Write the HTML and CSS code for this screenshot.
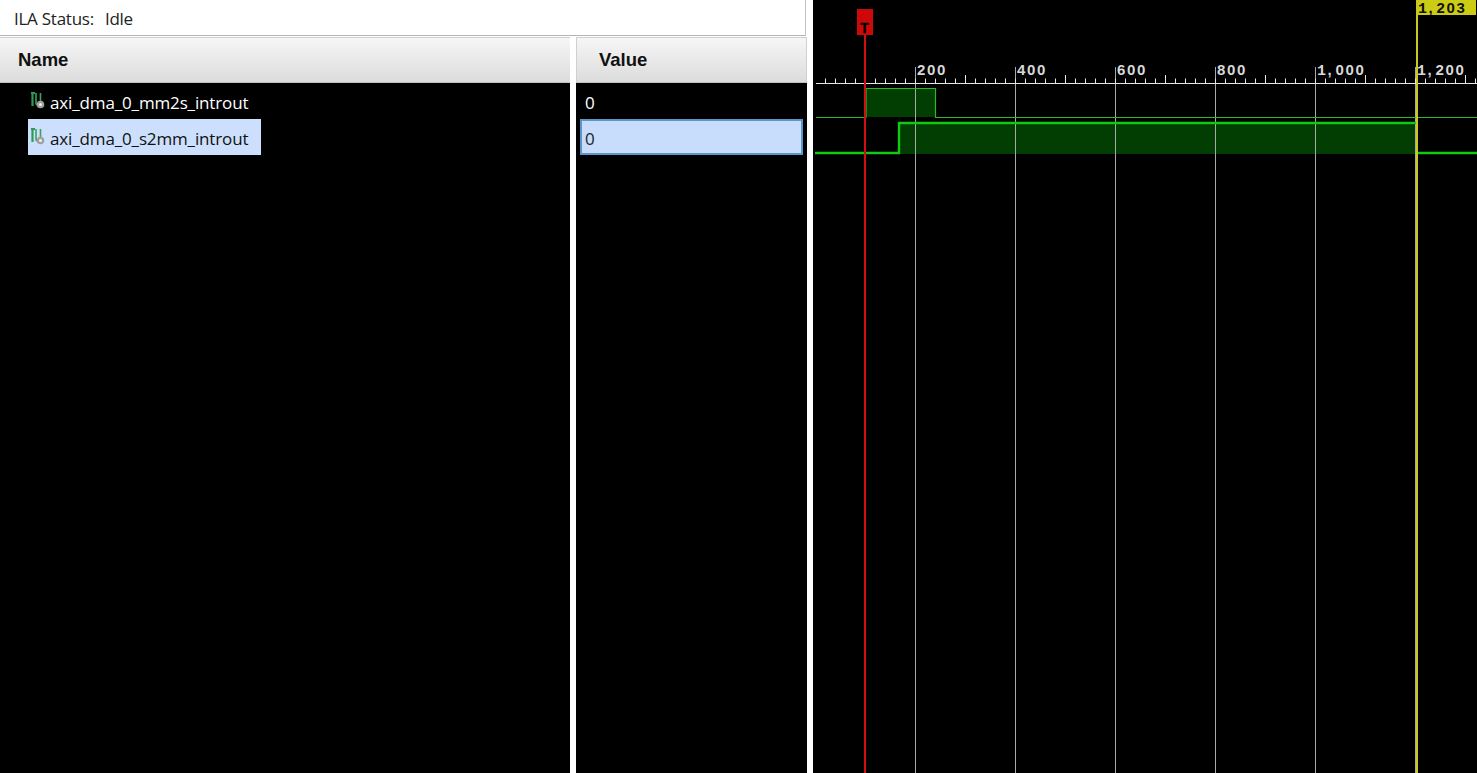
FILE: index.html
```html
<!DOCTYPE html>
<html lang="en">
<head>
<meta charset="utf-8">
<title>ILA Waveform</title>
<link rel="stylesheet" href="styles.css">
</head>
<body>
<div class="app">
  <section class="left">
    <div class="status"><span>ILA Status:</span><span>Idle</span></div>
    <div class="tables">
      <div class="col col-name">
        <div class="head">Name</div>
        <div class="body">
          <div class="row">
            <svg class="sig-icon" viewBox="0 0 16 17"><path class="ic-a" d="M1.5 0V14"/><path class="ic-a" d="M0 1H4"/><path class="ic-b" d="M5 1V11Q5 13 7 13M9.5 1V9"/><circle class="ic-c" cx="9.5" cy="12.5" r="3.8"/><circle class="ic-d" cx="9.5" cy="12.5" r="1.5"/></svg>
            <span class="label">axi_dma_0_mm2s_introut</span>
          </div>
          <div class="row selected">
            <svg class="sig-icon" viewBox="0 0 16 17"><path class="ic-a" d="M1.5 0V14"/><path class="ic-a" d="M0 1H4"/><path class="ic-b" d="M5 1V11Q5 13 7 13M9.5 1V9"/><circle class="ic-c" cx="9.5" cy="12.5" r="3.8"/><circle class="ic-d" cx="9.5" cy="12.5" r="1.5"/></svg>
            <span class="label">axi_dma_0_s2mm_introut</span>
          </div>
        </div>
      </div>
      <div class="col col-value">
        <div class="head">Value</div>
        <div class="body">
          <div class="val">0</div>
          <div class="val val-selected">0</div>
        </div>
      </div>
    </div>
  </section>
  <section class="wave">
    <svg class="wave-svg" width="664" height="773" viewBox="813 0 664 773">
      <path class="fill" d="M866 88H935V117H866Z"/>
      <path class="fill" d="M899 123H1416V154H899Z"/>
      <path class="grid" d="M915.5 67V773M1015.5 67V773M1115.5 67V773M1215.5 67V773M1315.5 67V773M1415.5 67V773"/>
      <line class="axis" x1="816" y1="83.5" x2="1477" y2="83.5"/>
      <line class="ticks" x1="825" y1="81" x2="1477" y2="81"/>
      <path class="axis" d="M965.5 75V83M1065.5 75V83M1165.5 75V83M1265.5 75V83M1365.5 75V83M1465.5 75V83"/>
      <text class="tick-label" x="917" y="75">200</text>
      <text class="tick-label" x="1017" y="75">400</text>
      <text class="tick-label" x="1117" y="75">600</text>
      <text class="tick-label" x="1217" y="75">800</text>
      <text class="tick-label" x="1317" y="75"><tspan class="mono">1</tspan><tspan class="comma" dx="1.5">,</tspan>000</text>
      <text class="tick-label" x="1417" y="75"><tspan class="mono">1</tspan><tspan class="comma" dx="1.5">,</tspan>200</text>
      <path class="sig-thin" d="M816 117.5H866V88.5H935.5V117.5H1477"/>
      <path class="sig-bold" d="M815 153H899V123H1416"/>
      <path class="sig-bold" d="M1418 153H1477"/>
      <rect class="t-line" x="864" y="30" width="2" height="743"/>
      <rect class="t-flag" x="857" y="9" width="16" height="26"/>
      <text class="t-text" x="864.5" y="33">T</text>
      <rect class="c-line" x="1416" y="0" width="2" height="773"/>
      <rect class="c-flag" x="1418" y="0" width="58" height="15"/>
      <text class="c-text" x="1418" y="13"><tspan class="mono">1</tspan><tspan class="comma" dx="1.5">,</tspan>203</text>
    </svg>
  </section>
</div>
</body>
</html>
```
FILE: styles.css
```css
html, body {
  margin: 0;
  padding: 0;
  height: 100%;
  background: #fff;
  overflow: hidden;
}
.app {
  display: flex;
  height: 773px;
  width: 1477px;
}
.left {
  width: 807px;
  display: flex;
  flex-direction: column;
  background: #fff;
  margin-right: 6px;
}
.status {
  height: 33px;
  width: 791px;
  padding: 2px 0 0 14px;
  border-bottom: 1px solid #b4b4b4;
  border-right: 1px solid #c4c4c4;
  display: flex;
  align-items: center;
  gap: 11px;
  font: 17px "Open Sans", "Noto Sans", sans-serif;
  letter-spacing: -0.25px;
  color: #222;
}
.tables {
  flex: 1;
  display: flex;
  gap: 6px;
  padding-top: 1px;
  min-height: 0;
}
.col {
  display: flex;
  flex-direction: column;
}
.col-name { width: 570px; }
.col-value { width: 231px; }
.head {
  height: 46px;
  box-sizing: border-box;
  border-top: 1px solid #d0d0d0;
  border-bottom: 1px solid #c0c0c0;
  background: linear-gradient(#f6f6f6, #dcdcdc);
  font: bold 18.5px "Liberation Sans", Arial, sans-serif;
  color: #111;
  display: flex;
  align-items: center;
  padding-left: 18px;
}
.col-value .head {
  padding-left: 22px;
  border-left: 1px solid #d0d0d0;
  border-right: 1px solid #d0d0d0;
}
.body {
  flex: 1;
  background: #000;
  color: #fff;
  font: 17px "Open Sans", "Noto Sans", sans-serif;
}
.col-name .body { padding-left: 28px; }
.row {
  display: flex;
  align-items: center;
  width: 233px;
  height: 36px;
  box-sizing: border-box;
  padding: 2px 0 0 3px;
}
.row.selected {
  background: #cce0fd;
  color: #111;
}
.label {
  margin-left: 3px;
  letter-spacing: -0.14px;
  white-space: nowrap;
}
.sig-icon {
  width: 16px;
  height: 17px;
  margin-top: -3px;
  flex: none;
}
.ic-a { fill: none; stroke: #2f9a55; stroke-width: 2.2; }
.ic-b { fill: none; stroke: #3f9e62; stroke-width: 1.6; }
.ic-c { fill: #a0a0a0; }
.ic-d { fill: #f0f0f0; }
.val {
  height: 36px;
  box-sizing: border-box;
  padding: 2px 0 0 9px;
  display: flex;
  align-items: center;
}
.val-selected {
  margin: 0 4px;
  padding-left: 3px;
  background: #c8ddfc;
  border: 2px solid #5a96c8;
  color: #222;
}
.wave {
  width: 664px;
  background: #000;
}
.wave-svg { display: block; }
.fill { fill: #023d02; }
.grid { fill: none; stroke: #a8a8a8; stroke-width: 1; }
.axis { fill: none; stroke: #e8e8e8; stroke-width: 1; }
.ticks { stroke: #e8e8e8; stroke-width: 5; stroke-dasharray: 1 9; }
.tick-label {
  font: bold 15px "Liberation Sans", sans-serif;
  letter-spacing: 1.66px;
  fill: #d8d8d8;
}
.mono {
  font: bold 15px "Liberation Mono", monospace;
  letter-spacing: 0;
}
.comma { letter-spacing: 3.7px; }
.sig-thin { fill: none; stroke: #2cb82c; stroke-width: 1.2; }
.sig-bold { fill: none; stroke: #12c812; stroke-width: 2.4; }
.t-line { fill: #d01010; }
.t-flag { fill: #cc0808; }
.t-text {
  font: bold 15px "Liberation Mono", monospace;
  fill: #000;
  stroke: #000;
  stroke-width: 0.3;
  text-anchor: middle;
}
.c-line { fill: #c8c820; }
.c-flag { fill: #cccc14; }
.c-text {
  font: bold 15px "Liberation Sans", sans-serif;
  letter-spacing: 1.66px;
  fill: #111;
}
```
